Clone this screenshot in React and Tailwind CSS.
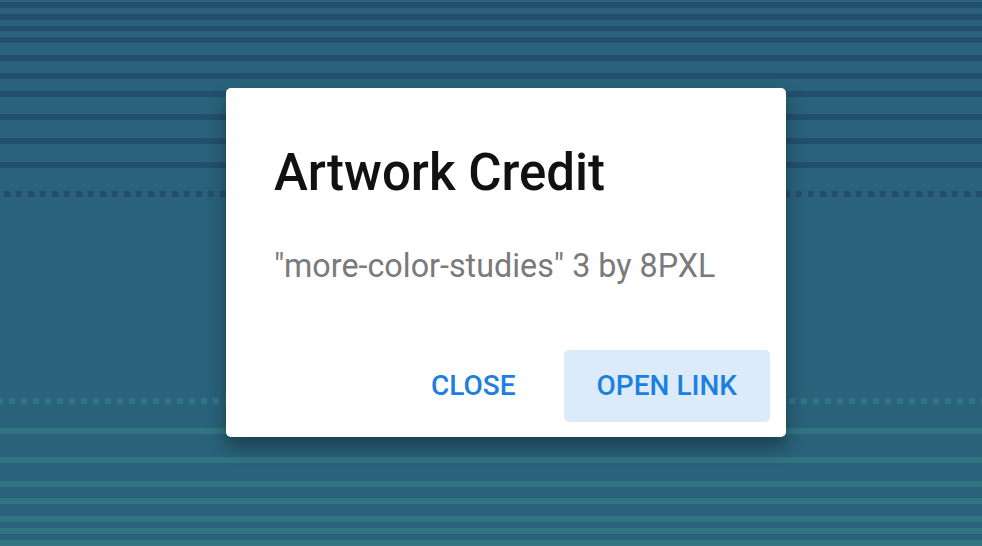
const rows = [
  ["base", 2], ["dark", 6], ["base", 6], ["dark", 6], ["base", 6], ["dark", 5], ["base", 6], ["dark", 6],
  ["base", 12], ["dark", 6], ["base", 12], ["dark", 6], ["base", 12], ["dark", 6], ["base", 17], ["dark", 6],
  ["base", 18], ["dark", 6], ["base", 18], ["dark", 6], ["base", 23], ["dotsDark", 6], ["base", 201],
  ["dotsLight", 6], ["base", 24], ["light", 6], ["base", 23], ["light", 6], ["base", 18], ["light", 6],
  ["base", 11], ["light", 6], ["base", 12], ["light", 6], ["base", 6], ["light", 6], ["base", 6], ["light", 6],
];

const tone = {
  base: "bg-[#29627a]",
  dark: "bg-[#234f6d]",
  light: "bg-[#327482]",
  dotsDark:
    "bg-[repeating-linear-gradient(90deg,#29627a_0_4px,#234f6d_4px_10px,#29627a_10px_12px)]",
  dotsLight:
    "bg-[repeating-linear-gradient(90deg,#327482_0_3px,#29627a_3px_9px,#327482_9px_12px)]",
};

function Backdrop() {
  return (
    <div className="flex flex-col">
      {rows.map(([kind, h], i) => (
        <div key={i} className={tone[kind]} style={{ height: h }} />
      ))}
    </div>
  );
}

export default function App() {
  return (
    <div className="relative h-[546px] w-[982px] overflow-hidden bg-[#29627a] font-['Roboto',sans-serif]">
      <Backdrop />
      <div className="absolute left-[226px] top-[88px] flex h-[349px] w-[560px] flex-col rounded-[5px] bg-white shadow-[0_10px_18px_rgba(0,0,0,0.35)]">
        <h2 className="pl-[48px] pt-[59px] text-[51px] font-medium leading-none text-[#111111]">
          Artwork Credit
        </h2>
        <p className="mt-[52px] pl-[48px] text-[32.3px] leading-none text-[#7a7a7a]">
          "more-color-studies" 3 by 8PXL
        </p>
        <div className="mt-auto flex justify-end gap-[15px] pb-[15px] pr-[16px]">
          <button className="h-[72px] rounded-[5px] px-[33px] text-[28px] font-medium text-[#1c80e2]">
            CLOSE
          </button>
          <button className="h-[72px] rounded-[5px] bg-[#dcebf9] px-[33px] text-[28px] font-medium text-[#1c80e2]">
            OPEN LINK
          </button>
        </div>
      </div>
    </div>
  );
}
